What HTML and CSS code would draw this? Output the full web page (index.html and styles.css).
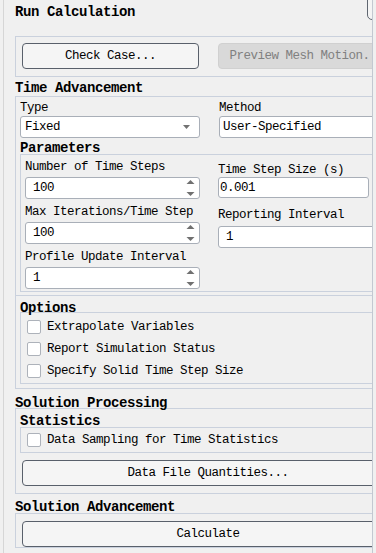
FILE: index.html
```html
<!DOCTYPE html>
<html lang="en">
<head>
  <meta charset="UTF-8">
  <title>Run Calculation</title>
  <meta name="viewport" content="width=device-width, initial-scale=1.0">
  <link rel="stylesheet" href="styles.css">
</head>
<body>

  <div class="panel">
    <div class="panel-inner">

      <div class="title-row">
        <h1>Run Calculation</h1>
        <button class="corner-btn" tabindex="-1"></button>
      </div>

      <div class="box box-check">
        <button class="btn">Check Case...</button>
        <button class="btn" disabled>Preview Mesh Motion...</button>
      </div>

      <h2 class="head head-ta">Time Advancement</h2>
      <div class="box box-ta">
        <div class="grid-ta">
          <div>
            <label class="lbl">Type</label>
            <div class="select">
              <span>Fixed</span>
              <svg width="7" height="4" viewBox="0 0 7 4"><polygon points="0,0 7,0 3.5,4" fill="#727272"/></svg>
            </div>
          </div>
          <div>
            <label class="lbl">Method</label>
            <input class="txt txt-method" type="text" value="User-Specified" readonly>
          </div>
        </div>

        <h2 class="head head-params">Parameters</h2>
        <div class="box box-params">
          <div class="col-l">
            <label class="lbl">Number of Time Steps</label>
            <div class="spin">
              <span>100</span>
              <svg width="9" height="20" viewBox="0 0 9 20"><polygon points="0.5,6 4.5,2 8.5,6" fill="#707070"/><polygon points="0.5,14 8.5,14 4.5,18" fill="#707070"/></svg>
            </div>
            <label class="lbl">Max Iterations/Time Step</label>
            <div class="spin">
              <span>100</span>
              <svg width="9" height="20" viewBox="0 0 9 20"><polygon points="0.5,6 4.5,2 8.5,6" fill="#707070"/><polygon points="0.5,14 8.5,14 4.5,18" fill="#707070"/></svg>
            </div>
            <label class="lbl">Profile Update Interval</label>
            <div class="spin">
              <span>1</span>
              <svg width="9" height="20" viewBox="0 0 9 20"><polygon points="0.5,6 4.5,2 8.5,6" fill="#707070"/><polygon points="0.5,14 8.5,14 4.5,18" fill="#707070"/></svg>
            </div>
          </div>
          <div class="col-r">
            <label class="lbl">Time Step Size (s)</label>
            <input class="txt txt-step" type="text" value="0.001" readonly>
            <label class="lbl lbl-rep">Reporting Interval</label>
            <input class="txt txt-rep" type="text" value="1" readonly>
          </div>
        </div>
      </div>

      <div class="box box-opt-wrap">
        <h2 class="head head-opt">Options</h2>
        <div class="box box-opt">
          <label class="check-row"><input type="checkbox"> Extrapolate Variables</label>
          <label class="check-row"><input type="checkbox"> Report Simulation Status</label>
          <label class="check-row"><input type="checkbox"> Specify Solid Time Step Size</label>
        </div>
      </div>

      <h2 class="head head-proc">Solution Processing</h2>
      <div class="box box-proc">
        <h2 class="head head-stats">Statistics</h2>
        <div class="box box-stats">
          <label class="check-row"><input type="checkbox"> Data Sampling for Time Statistics</label>
        </div>
        <button class="btn btn-wide btn-data">Data File Quantities...</button>
      </div>

      <h2 class="head head-adv">Solution Advancement</h2>
      <div class="box box-adv">
        <button class="btn btn-wide">Calculate</button>
      </div>

    </div>
  </div>

</body>
</html>
```

FILE: styles.css
```css
:root {
  --bg: #f0f0f0;
  --line: #cad1dd;
  --field: #a9afb8;
  --btn-border: #59606b;
}

body {
  margin: 0;
  background: var(--bg);
  color: #000;
  font-family: "Liberation Mono", "DejaVu Sans Mono", monospace;
  font-size: 12.5px;
  letter-spacing: -0.5px;
}

/* window frame, content wider than it gets clipped on the right */
.panel {
  box-sizing: border-box;
  width: 370px;
  height: 553px;
  margin-left: 3px;
  padding-left: 11px;
  border-left: 1px solid #d6d6d6;
  border-right: 1px solid #c3c8d1;
  overflow: hidden;
}

.panel-inner {
  width: 386px;
}

.title-row {
  display: flex;
  padding-top: 4px;
}

.title-row h1 {
  flex: 1;
  margin: 0;
  font-size: 14px;
  letter-spacing: -0.4px;
  line-height: 17px;
}

.corner-btn {
  align-self: flex-start;
  width: 30px;
  height: 30px;
  margin: -14px 4px 0 0;
  padding: 0;
  background: #f4f4f4;
  border: 1px solid #5f6670;
  border-radius: 5px;
}

.box {
  border: 1px solid var(--line);
}

.head {
  margin: 0;
  font-size: 14px;
  letter-spacing: -0.4px;
  font-weight: bold;
  line-height: 12px;
}

.lbl {
  display: block;
  line-height: 14px;
}

/* buttons */
.btn {
  box-sizing: border-box;
  height: 26px;
  padding: 0;
  font: inherit;
  letter-spacing: inherit;
  color: #000;
  white-space: nowrap;
  background: #f5f5f5;
  border: 1px solid var(--btn-border);
  border-radius: 4px;
}

.btn:disabled {
  background: #d9d9d9;
  border-color: #d0d0d0;
  color: #808080;
}

.btn-wide {
  display: block;
  width: calc(100% - 4px);
  margin: 0 2px;
}

.box-check {
  display: grid;
  grid-template-columns: 177px 177px;
  column-gap: 19px;
  margin-top: 15px;
  padding: 6px 6px 7px;
}

/* time advancement */
.head-ta {
  margin: 5px 0 2px;
}

.box-ta {
  padding: 4px 4px 3px;
}

.grid-ta {
  display: grid;
  grid-template-columns: 180px 1fr;
  column-gap: 19px;
}

.select {
  box-sizing: border-box;
  display: flex;
  align-items: center;
  justify-content: space-between;
  height: 22px;
  margin-top: 1px;
  padding: 0 9px 0 4px;
  background: #fff;
  border: 1px solid var(--field);
  border-radius: 3px;
}

.txt {
  box-sizing: border-box;
  display: block;
  width: 100%;
  height: 22px;
  margin: 0;
  padding: 0 3px;
  font: inherit;
  letter-spacing: inherit;
  color: #000;
  background: #fff;
  border: 1px solid var(--field);
  border-radius: 3px;
  outline: none;
}

.txt-method {
  margin-top: 1px;
}

.head-params {
  margin-top: 4px;
}

.box-params {
  display: grid;
  grid-template-columns: 175px 1fr;
  column-gap: 18px;
  align-items: start;
  padding: 0 4px 2px;
}

.col-l {
  padding-top: 5px;
}

.spin {
  box-sizing: border-box;
  display: flex;
  align-items: center;
  height: 22px;
  margin: 3px 0 6px;
  padding: 0 4px 0 7px;
  background: #fff;
  border: 1px solid var(--field);
  border-radius: 3px;
}

.spin:last-child {
  margin-bottom: 0;
}

.spin span {
  flex: 1;
}

.col-r {
  padding-top: 8px;
}

.txt-step {
  width: 151px;
  height: 21px;
  padding: 0 1px;
}

.lbl-rep {
  margin-top: 10px;
}

.txt-rep {
  margin-top: 4px;
  padding: 0 7px;
}

/* options */
.box-opt-wrap {
  border-top: none;
  padding: 6px 4px 4px;
}

.head-opt {
  margin-bottom: -2px;
}

.box-opt {
  padding: 3px 6px 1px;
}

.check-row {
  display: flex;
  align-items: center;
  gap: 6px;
  height: 22px;
}

.check-row input {
  appearance: none;
  -webkit-appearance: none;
  box-sizing: border-box;
  width: 14px;
  height: 14px;
  margin: 0;
  background: #fff;
  border: 1px solid #adb2ba;
  border-radius: 2px;
}

/* solution processing */
.head-proc {
  margin: 8px 0 -1px;
}

.box-proc {
  padding: 0 4px 7px;
}

.head-stats {
  margin-top: 6px;
}

.box-stats {
  padding: 1px 6px;
}

.btn-data {
  margin-top: 7px;
}

.head-adv {
  margin-top: 7px;
}

.box-adv {
  padding: 7px 4px 0;
}
```
